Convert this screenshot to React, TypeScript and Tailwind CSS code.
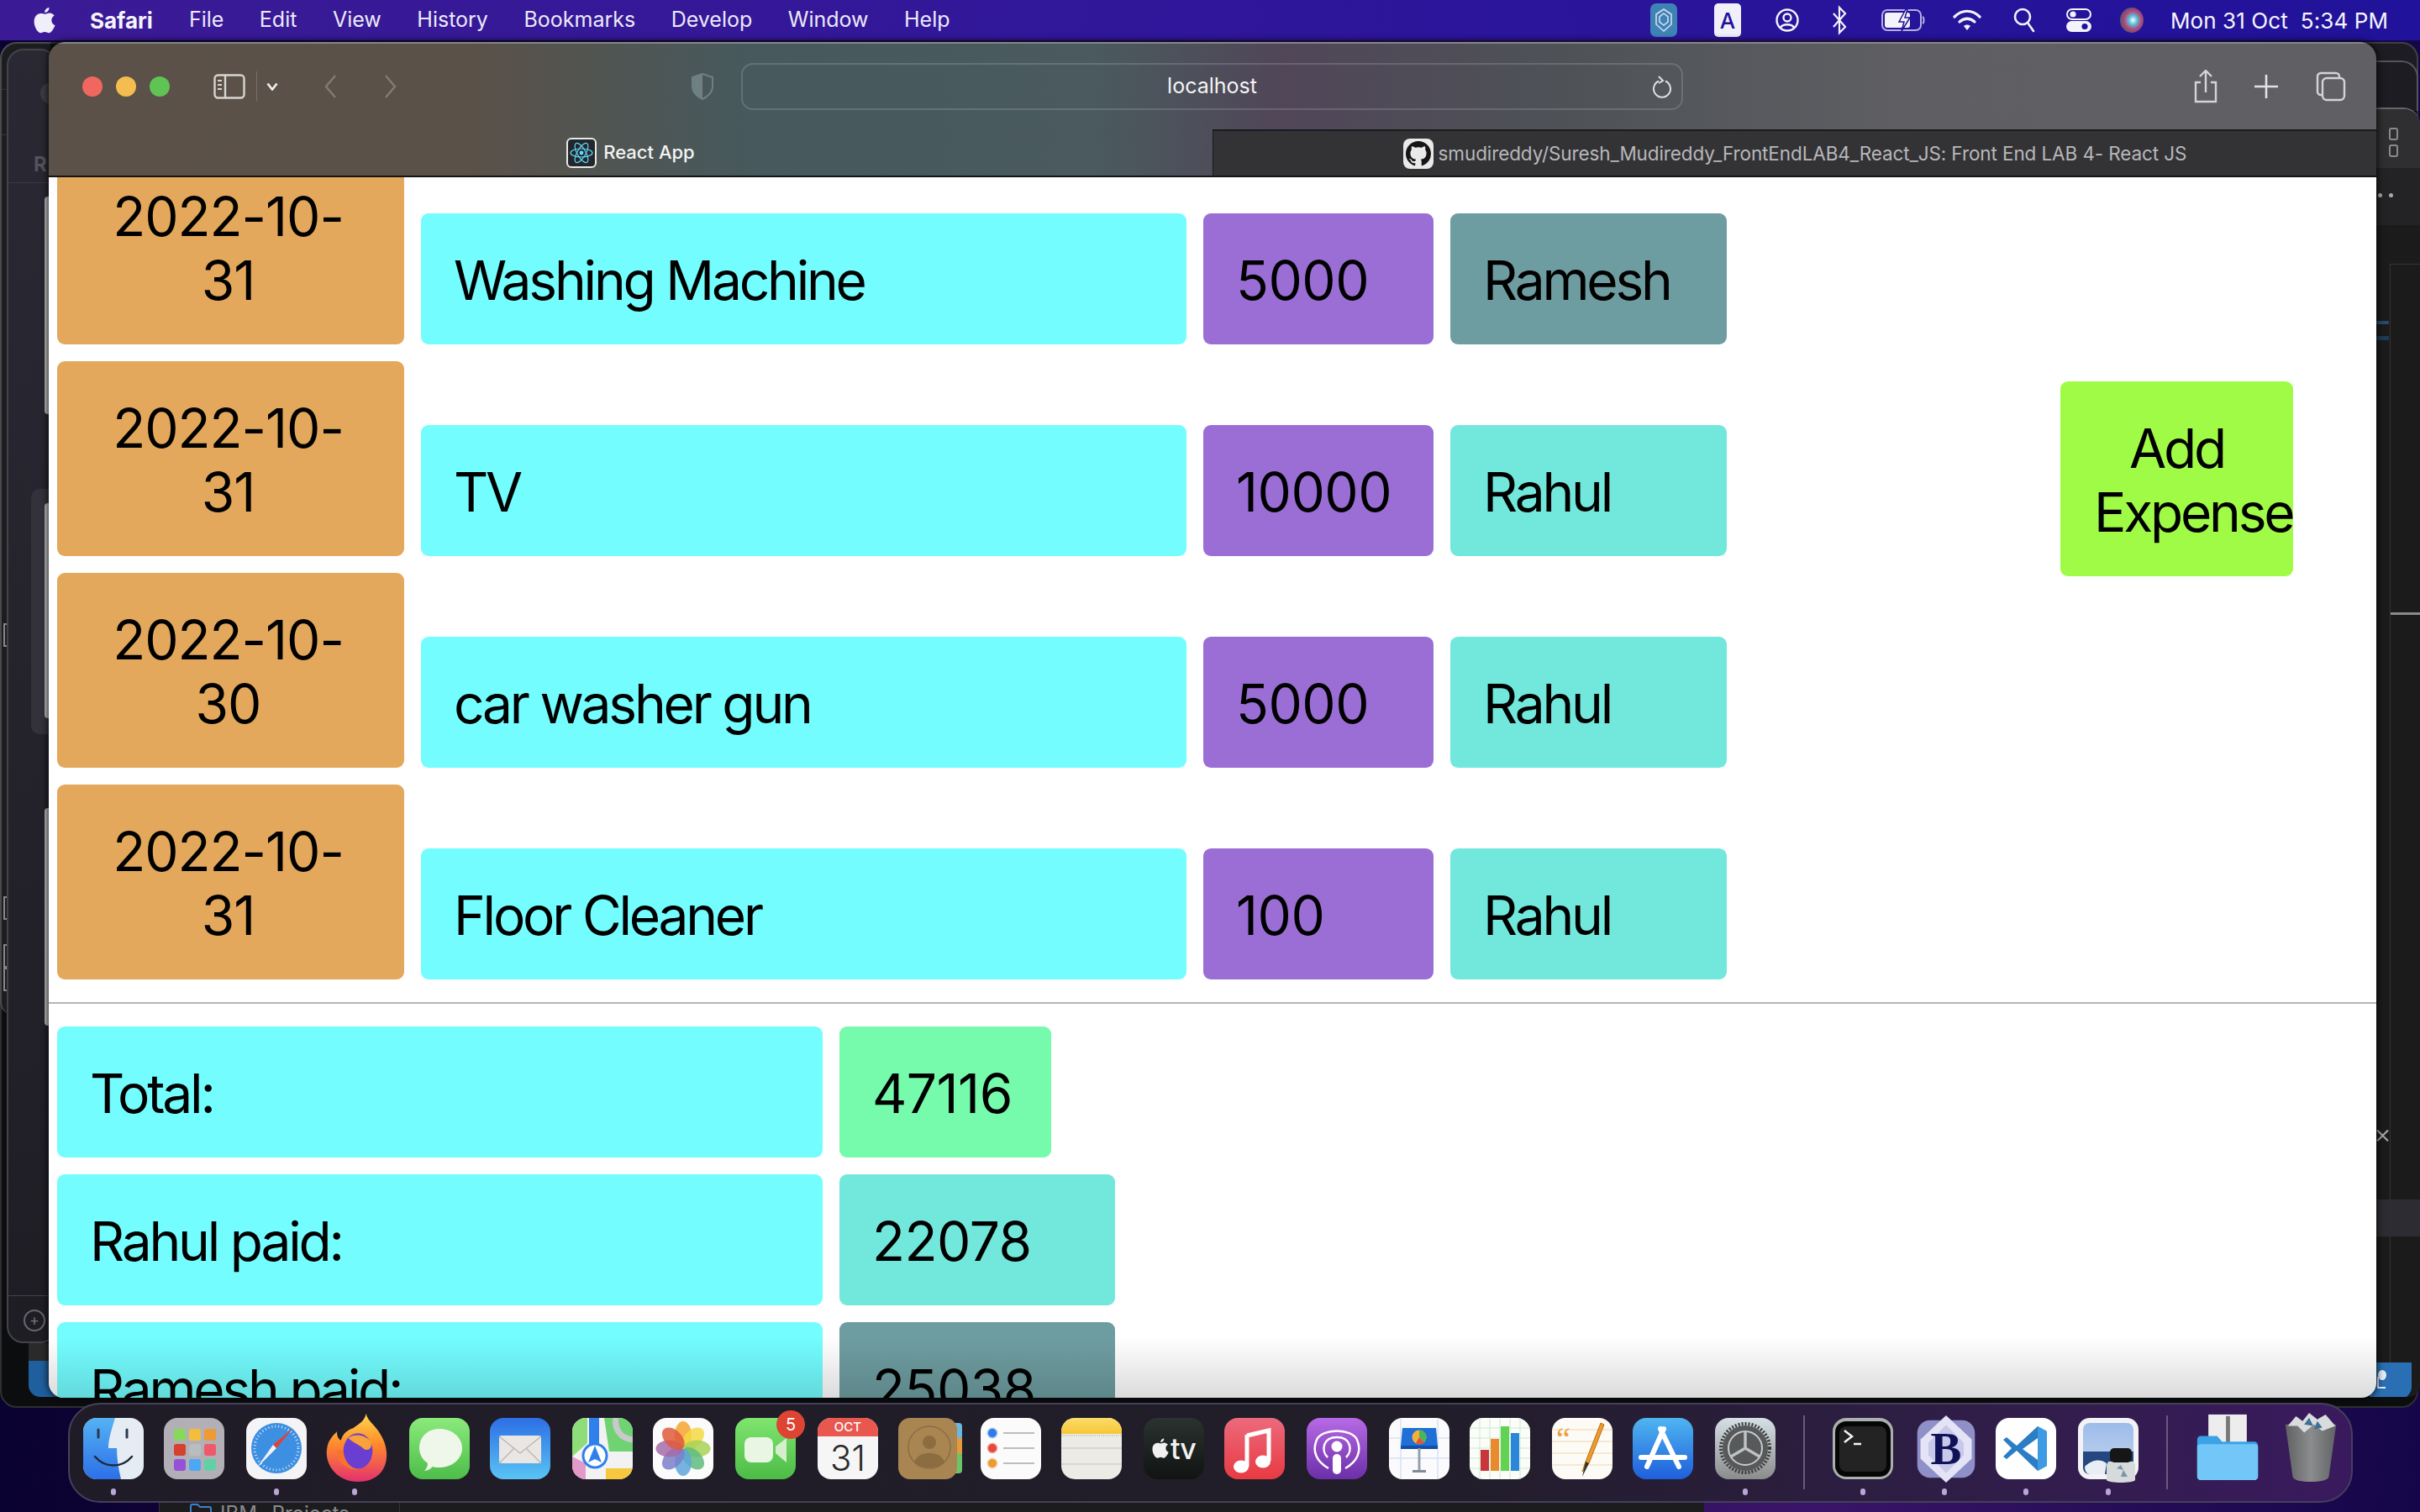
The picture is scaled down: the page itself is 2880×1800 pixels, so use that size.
import { Fragment } from 'react'
import type { JSX } from 'react'

const MENU = ['File', 'Edit', 'View', 'History', 'Bookmarks', 'Develop', 'Window', 'Help']

const EXPENSES = [
  { date: ['2022-10-', '31'], name: 'Washing Machine', price: '5000', payer: 'Ramesh' },
  { date: ['2022-10-', '31'], name: 'TV', price: '10000', payer: 'Rahul' },
  { date: ['2022-10-', '30'], name: 'car washer gun', price: '5000', payer: 'Rahul' },
  { date: ['2022-10-', '31'], name: 'Floor Cleaner', price: '100', payer: 'Rahul' },
]

const cell = 'rounded-[9px] pt-[42px] pb-[38px] text-[64px] leading-[76px] text-black'
const word = `${cell} pr-[40px] pl-[39px] tracking-[-3.2px]`
const num = `${cell} pr-[40px] pl-[39px] tracking-[-0.5px]`

function MenuIcons() {
  return (
    <div className="flex items-center">
      <svg width="32" height="40" viewBox="0 0 32 40">
        <rect width="32" height="40" rx="7" fill="#3f82b5" />
        <path d="M16 7l9 6v12l-9 8-9-8V13z" fill="none" stroke="#cfe0ee" strokeWidth="1.6" />
        <path d="M16 12l5 4v6l-5 4-5-4v-6z" fill="none" stroke="#cfe0ee" strokeWidth="1.6" />
      </svg>
      <div className="ml-[44px] flex h-[40px] w-[32px] items-center justify-center rounded-[5px] bg-[#f1effa] font-['Inter',sans-serif] text-[26px] font-medium text-[#20129a]">
        A
      </div>
      <svg width="28" height="32" viewBox="0 0 28 32" fill="none" stroke="#f4f2fb" strokeWidth="2.4" className="ml-[41px]">
        <circle cx="14" cy="16" r="12.5" />
        <circle cx="14" cy="13" r="4.5" />
        <path d="M6 25c2-5 14-5 16 0" />
      </svg>
      <svg width="18" height="36" viewBox="0 0 18 36" fill="none" stroke="#f4f2fb" strokeWidth="2.2" className="ml-[39px]">
        <path d="M2 10l14 16-7 7V3l7 7L2 26" />
      </svg>
      <svg width="52" height="28" viewBox="0 0 52 28" fill="none" className="ml-[41px]">
        <rect x="1" y="2" width="46" height="24" rx="6" stroke="#b4aee2" strokeWidth="2" />
        <rect x="4" y="5" width="30" height="18" rx="3" fill="#f4f2fb" />
        <path d="M29 1l-8 15h6l-3 11 10-16h-6l3-10z" fill="#f4f2fb" stroke="#20129a" strokeWidth="1.5" />
        <path d="M49 10c2 1 2 7 0 8" stroke="#b4aee2" strokeWidth="2" />
      </svg>
      <svg width="34" height="28" viewBox="0 0 34 28" fill="none" stroke="#f4f2fb" strokeWidth="3.2" strokeLinecap="round" className="ml-[33px]">
        <path d="M2 10c9-9 21-9 30 0" />
        <path d="M8 16c6-5 12-5 18 0" />
        <path d="M17 26l-4-5c2-2 6-2 8 0z" fill="#f4f2fb" stroke="none" />
      </svg>
      <svg width="26" height="30" viewBox="0 0 26 30" fill="none" stroke="#f4f2fb" strokeWidth="2.6" strokeLinecap="round" className="ml-[38px]">
        <circle cx="11" cy="11" r="9" />
        <path d="M17 18l7 10" />
      </svg>
      <svg width="30" height="28" viewBox="0 0 30 28" className="ml-[37px]">
        <rect x="1" y="1" width="28" height="12" rx="6" fill="none" stroke="#f4f2fb" strokeWidth="2" />
        <circle cx="8" cy="7" r="3.6" fill="#f4f2fb" />
        <rect y="15" width="30" height="13" rx="6.5" fill="#f4f2fb" />
        <circle cx="22" cy="21.5" r="3.6" fill="#20129a" />
      </svg>
      <svg width="28" height="30" viewBox="0 0 28 30" className="ml-[34px]">
        <defs>
          <radialGradient id="siri" cx="55%" cy="50%" r="60%">
            <stop offset="0" stopColor="#ffffff" />
            <stop offset="0.3" stopColor="#56c1d8" />
            <stop offset="0.6" stopColor="#b6477f" />
            <stop offset="1" stopColor="#3f5a59" />
          </radialGradient>
        </defs>
        <ellipse cx="14" cy="15" rx="14" ry="15" fill="url(#siri)" />
      </svg>
      <span className="ml-[32px] font-['Inter',sans-serif] text-[26px] tracking-[0.1px] whitespace-pre text-[#f6f4fd]">
        Mon 31 Oct  5:34 PM
      </span>
    </div>
  )
}

function MenuBar() {
  return (
    <div className="relative z-10 flex h-[48px] items-center justify-between bg-gradient-to-r from-[#3b1a95] via-[#2f169a] to-[#20129a] pr-[38px] pl-[40px] font-['Inter',sans-serif]">
      <div className="flex items-center">
        <svg width="26" height="32" viewBox="0 0 26 32" fill="#f1eefb">
          <path d="M18.5 1c.3 3-2.4 6-5.3 6-.3-3 2.600-6 5.300-6zM13.400 8.700c1.500 0 3-1.300 5.600-1.300 2 0 4.300 1.100 5.700 3.200-5 2.800-4.200 9.700.9 11.700-1.600 4-4.700 9-7.500 9-1.800 0-2.800-1.200-4.800-1.200s-3.200 1.200-4.800 1.200C5 31.300.6 24.100.6 17.700c0-6 3.800-9.700 7.700-9.700 2.200 0 3.800.7 5.100.7z" />
        </svg>
        <span className="ml-[41px] text-[26px] font-bold text-[#f6f4fd]">Safari</span>
        <div className="ml-[43px] flex gap-[42.5px] text-[25px] text-[#ece9fa]">
          {MENU.map((m) => (
            <span key={m}>{m}</span>
          ))}
        </div>
      </div>
      <MenuIcons />
    </div>
  )
}

function Toolbar() {
  return (
    <div className="flex h-[104px] items-center border-t-2 border-[#84878a] pl-[40px]">
      <div className="flex gap-[16px]">
        <span className="h-[24px] w-[24px] rounded-full bg-[#f0675f]" />
        <span className="h-[24px] w-[24px] rounded-full bg-[#f5bd4f]" />
        <span className="h-[24px] w-[24px] rounded-full bg-[#5fc454]" />
      </div>
      <svg width="38" height="30" viewBox="0 0 38 30" fill="none" stroke="#d8d4cf" strokeWidth="2.4" className="ml-[52px]">
        <rect x="1.500" y="1.500" width="35" height="27" rx="4" />
        <path d="M14 2v26" />
        <path d="M5 8h5M5 13h5M5 18h5" strokeWidth="2" />
      </svg>
      <div className="ml-[13px] h-[36px] w-px bg-[#77716c]" />
      <svg width="14" height="10" viewBox="0 0 14 10" fill="none" stroke="#f1f1f1" strokeWidth="2.600" className="ml-[11px]">
        <path d="M1.500 1.500L7 8.500l5.500-7" />
      </svg>
      <svg width="16" height="30" viewBox="0 0 16 30" fill="none" stroke="#827c76" strokeWidth="2.400" className="ml-[54px]">
        <path d="M14 2L3 15l11 13" />
      </svg>
      <svg width="16" height="30" viewBox="0 0 16 30" fill="none" stroke="#827c76" strokeWidth="2.400" className="ml-[56px]">
        <path d="M2 2l11 13L2 28" />
      </svg>
      <svg width="28" height="32" viewBox="0 0 28 32" className="ml-[349px]">
        <path d="M14 1l12 4v11c0 7-6 12-12 15C8 28 2 23 2 16V5z" fill="none" stroke="#6f8083" strokeWidth="2" />
        <path d="M14 1L2 5v11c0 7 6 12 12 15z" fill="#6f8083" />
      </svg>
      <div className="relative ml-[32px] flex h-[56px] w-[1121px] items-center justify-center rounded-[14px] border-2 border-[#ffffff26] font-['Inter',sans-serif] text-[25px] text-[#f4f4f4]">
        localhost
        <svg width="24" height="30" viewBox="0 0 24 30" fill="none" stroke="#e0e0e0" strokeWidth="2" className="absolute top-[11px] right-[11px]">
          <path d="M8 8.500a10 10 0 1 0 8 0" />
          <path d="M8 3l5 5-5 3" />
        </svg>
      </div>
      <svg width="30" height="40" viewBox="0 0 30 40" fill="none" stroke="#d4d4d6" strokeWidth="2.400" className="ml-[607px]">
        <path d="M9 15H3v23h24V15h-6" />
        <path d="M15 27V2M8 8l7-7 7 7" />
      </svg>
      <svg width="28" height="28" viewBox="0 0 28 28" fill="none" stroke="#e2e2e4" strokeWidth="2.600" className="ml-[43px]">
        <path d="M14 0v28M0 14h28" />
      </svg>
      <svg width="36" height="36" viewBox="0 0 36 36" fill="none" stroke="#d4d4d6" strokeWidth="2.400" className="ml-[45px]">
        <rect x="8" y="8" width="26" height="26" rx="5" />
        <path d="M8 28H6a4 4 0 0 1-4-4V6a4 4 0 0 1 4-4h18a4 4 0 0 1 4 4v2" />
      </svg>
    </div>
  )
}

function ReactFavicon() {
  return (
    <div className="flex h-[36px] w-[36px] items-center justify-center rounded-[6px] border-2 border-[#e8e8e8] bg-[#23272b]">
      <svg width="28" height="30" viewBox="-14 -15 28 30" fill="none" stroke="#61dafb" strokeWidth="1.200">
        <ellipse rx="13" ry="5" />
        <ellipse rx="13" ry="5" transform="rotate(60)" />
        <ellipse rx="13" ry="5" transform="rotate(120)" />
        <circle r="2.400" fill="#61dafb" stroke="none" />
      </svg>
    </div>
  )
}

function GithubFavicon() {
  return (
    <div className="flex h-[36px] w-[36px] items-center justify-center rounded-[8px] bg-[#e9e9e9]">
      <svg width="30" height="30" viewBox="0 0 16 16" fill="#161616">
        <path d="M8 0C3.580 0 0 3.580 0 8c0 3.540 2.290 6.530 5.470 7.590.4.070.55-.17.55-.38v-1.340c-2.230.48-2.700-1.070-2.700-1.070-.36-.93-.89-1.170-.89-1.170-.73-.5.060-.49.060-.49.800.060 1.220.830 1.220.830.710 1.220 1.870.870 2.330.660.070-.520.280-.870.510-1.070-1.780-.2-3.640-.89-3.640-3.950 0-.870.310-1.590.820-2.150-.080-.2-.360-1.020.080-2.120 0 0 .670-.210 2.200.820a7.600 7.600 0 0 1 4 0c1.530-1.040 2.200-.820 2.200-.820.440 1.100.160 1.920.080 2.120.510.560.820 1.270.820 2.150 0 3.070-1.870 3.750-3.650 3.950.290.250.540.730.540 1.480v2.200c0 .210.150.460.550.380A8 8 0 0 0 16 8c0-4.420-3.580-8-8-8z" />
      </svg>
    </div>
  )
}

function TabBar() {
  return (
    <div className="flex h-[57px] border-b-2 border-[#151515]">
      <div className="flex w-[1385px] items-center justify-center gap-[8px] font-['Inter',sans-serif] text-[22px] font-medium text-[#f4f4f4]">
        <ReactFavicon />
        <span>React App</span>
      </div>
      <div className="flex flex-1 items-center justify-center gap-[6px] border-t-2 border-l border-[#1a1a1a] bg-[#333336] font-['Inter',sans-serif] text-[22.5px] tracking-[-0.1px] text-[#b8b8ba]">
        <GithubFavicon />
        <span>smudireddy/Suresh_Mudireddy_FrontEndLAB4_React_JS: Front End LAB 4- React JS</span>
      </div>
    </div>
  )
}

function ExpensePage() {
  return (
    <div className="relative flex-1 overflow-hidden bg-white font-['Inter',sans-serif]">
      {/* page is scrolled a little, first row is cut by the tab bar */}
      <div className="-mt-[33px] flex pl-[10px]">
        <div className="flex w-[1987px] flex-col gap-[20px]">
          {EXPENSES.map((e) => (
            <div key={e.name} className="flex items-end gap-[20px]">
              <div className={`${cell} w-[413px] bg-[#e3a85c] pr-[43px] pl-[37px] text-center tracking-[-1px]`}>
                {e.date[0]}
                <br />
                {e.date[1]}
              </div>
              <div className={`${word} w-[911px] bg-[#73fdff]`}>{e.name}</div>
              <div className={`${num} w-[274px] bg-[#9b6ed6]`}>{e.price}</div>
              <div className={`${word} w-[329px] ${e.payer === 'Ramesh' ? 'bg-[#6e9da1]' : 'bg-[#72e8dd]'}`}>{e.payer}</div>
            </div>
          ))}
        </div>
        <div className="mt-[276px] ml-[397px]">
          <button className={`${cell} w-[277px] bg-[#a0fb47] px-[40px] text-center tracking-[-3.2px]`}>Add Expense</button>
        </div>
      </div>

      <div className="mt-[27px] border-t-2 border-[#b5b5b5] pt-[27px] pl-[10px]">
        <div className="flex flex-col gap-[20px]">
          <div className="flex gap-[20px]">
            <div className={`${word} w-[911px] bg-[#73fdff]`}>Total:</div>
            <div className={`${num} w-[252px] bg-[#75fbab]`}>47116</div>
          </div>
          <div className="flex gap-[20px]">
            <div className={`${word} w-[911px] bg-[#73fdff]`}>Rahul paid:</div>
            <div className={`${num} w-[328px] bg-[#72e8dd]`}>22078</div>
          </div>
          <div className="flex gap-[20px]">
            <div className={`${word} w-[911px] bg-[#73fdff]`}>Ramesh paid:</div>
            <div className={`${num} w-[328px] bg-[#6e9da1]`}>25038</div>
          </div>
        </div>
      </div>

      {/* shadow the dock throws on the page */}
      <div className="pointer-events-none absolute right-0 bottom-0 left-0 h-[72px] bg-gradient-to-b from-transparent to-[#00000024]" />
    </div>
  )
}

function FinderIcon() {
  return (
    <svg width="72" height="73" viewBox="0 0 72 73">
      <defs>
        <linearGradient id="fi" x1="0" y1="0" x2="0" y2="1">
          <stop offset="0" stopColor="#55b2f3" />
          <stop offset="1" stopColor="#2c6fe8" />
        </linearGradient>
        <clipPath id="fc"><rect width="72" height="73" rx="16" /></clipPath>
      </defs>
      <g clipPath="url(#fc)">
        <rect width="72" height="73" fill="#e6ecf3" />
        <path d="M0 0h38c-4 14-8 24-8 36h10c0 12 2 25 5 37H0z" fill="url(#fi)" />
        <path d="M18 14v9M52 14v9" stroke="#2b3a4e" strokeWidth="3" strokeLinecap="round" />
        <path d="M14 46c12 14 32 14 44 0" fill="none" stroke="#1f2b3c" strokeWidth="2.500" strokeLinecap="round" />
      </g>
    </svg>
  )
}

function LaunchpadIcon() {
  const colors = ['#86d95a', '#f4bd3d', '#ee9a35', '#d6402f', '#b9bdbf', '#ee5a6c', '#9552d8', '#4aa8f5', '#62d0a6']
  return (
    <svg width="72" height="73" viewBox="0 0 72 73">
      <rect width="72" height="73" rx="16" fill="#b2b0b6" />
      {colors.map((c, i) => (
        <rect key={c} x={12 + (i % 3) * 18} y={13 + Math.floor(i / 3) * 18} width="14" height="14" rx="3" fill={c} />
      ))}
    </svg>
  )
}

function SafariIcon() {
  return (
    <svg width="72" height="73" viewBox="0 0 72 73">
      <rect width="72" height="73" rx="16" fill="#f4f4f6" />
      <circle cx="36" cy="36" r="30" fill="#3d8fe2" />
      <circle cx="36" cy="36" r="26" fill="none" stroke="#d6e8f8" strokeWidth="3" strokeDasharray="1 3" />
      <path d="M36 36l20-24-24 20z" fill="#e4402f" />
      <path d="M36 36L12 60l20-28z" fill="#f2f2f2" />
    </svg>
  )
}

function FirefoxIcon() {
  return (
    <svg width="80" height="81" viewBox="0 0 80 84" className="-mt-[5px]">
      <defs>
        <linearGradient id="ff" x1="0" y1="0" x2="0" y2="1">
          <stop offset="0" stopColor="#ffd84a" />
          <stop offset="0.45" stopColor="#ff8a2b" />
          <stop offset="1" stopColor="#e3316f" />
        </linearGradient>
      </defs>
      <path d="M50 0c2 10 12 14 18 26 14 22 10 58-28 58C12 84-2 60 2 42c1-8 6-14 12-20 0 6 2 9 5 11 2-8 8-13 15-15 6-5 14-8 16-18z" fill="url(#ff)" />
      <ellipse cx="40" cy="46" rx="18" ry="22" fill="#6a3ed0" />
      <path d="M28 30c8-6 20-4 28 4 2 8-2 12-8 10-6-6-14-8-20-14z" fill="#f9a13a" />
      <path d="M22 44c0 14 10 26 22 24-14 4-30-6-30-22z" fill="#f7722e" />
    </svg>
  )
}

function MessagesIcon() {
  return (
    <svg width="72" height="73" viewBox="0 0 72 73">
      <defs>
        <linearGradient id="mg" x1="0" y1="0" x2="0" y2="1">
          <stop offset="0" stopColor="#8aea7b" />
          <stop offset="1" stopColor="#4dbd4a" />
        </linearGradient>
      </defs>
      <rect width="72" height="73" rx="16" fill="url(#mg)" />
      <path d="M36 13c15 0 27 10 27 23S51 59 36 59c-3 0-6 0-8-1-3 3-6 5-10 5 2-2 4-5 4-9-6-4-10-11-10-18 0-13 9-23 24-23z" fill="#eef7ea" />
    </svg>
  )
}

function MailIcon() {
  return (
    <svg width="72" height="73" viewBox="0 0 72 73">
      <defs>
        <linearGradient id="mlg" x1="0" y1="0" x2="0" y2="1">
          <stop offset="0" stopColor="#2c6fe4" />
          <stop offset="1" stopColor="#5ac4f5" />
        </linearGradient>
      </defs>
      <rect width="72" height="73" rx="16" fill="url(#mlg)" />
      <rect x="11" y="21" width="50" height="33" rx="3" fill="#e9e6e3" />
      <path d="M11 22l25 20 25-20M11 54l18-18M61 54L43 36" fill="none" stroke="#b8b5b2" strokeWidth="1.300" />
    </svg>
  )
}

function MapsIcon() {
  return (
    <svg width="72" height="73" viewBox="0 0 72 73">
      <defs><clipPath id="mc"><rect width="72" height="73" rx="16" /></clipPath></defs>
      <g clipPath="url(#mc)">
        <rect width="72" height="73" fill="#f2f2f2" />
        <path d="M0 0h18v30L0 46z" fill="#8fdc7a" />
        <path d="M38 0h34v40H44z" fill="#6fd374" />
        <path d="M0 46l16 8v19H0z" fill="#e39ac8" />
        <path d="M40 60h32v13H40z" fill="#f6c73f" />
        <path d="M20 0h12v34H20z" fill="#2f80ed" />
        <path d="M72 26C56 24 50 12 52 0" fill="none" stroke="#c9c9cc" strokeWidth="7" />
        <circle cx="27" cy="45" r="14" fill="#fff" stroke="#2f80ed" strokeWidth="3" />
        <path d="M27 33l8 20-8-4-8 4z" fill="#2f80ed" />
      </g>
    </svg>
  )
}

function PhotosIcon() {
  const petals = ['#f6a32f', '#f3d944', '#a8d256', '#5fbb7e', '#5ea6da', '#7b7fc9', '#a46ba9', '#df5a3d']
  return (
    <svg width="72" height="73" viewBox="0 0 72 73">
      <rect width="72" height="73" rx="16" fill="#fbfbfb" />
      {petals.map((c, i) => (
        <ellipse key={c} cx="36" cy="20" rx="10" ry="16" fill={c} fillOpacity="0.85" transform={`rotate(${i * 45} 36 36.500)`} />
      ))}
    </svg>
  )
}

function FaceTimeIcon() {
  return (
    <div className="relative">
      <svg width="72" height="73" viewBox="0 0 72 73">
        <defs>
          <linearGradient id="ftg" x1="0" y1="0" x2="0" y2="1">
            <stop offset="0" stopColor="#7fe56f" />
            <stop offset="1" stopColor="#4cbc47" />
          </linearGradient>
        </defs>
        <rect width="72" height="73" rx="16" fill="url(#ftg)" />
        <rect x="11" y="23" width="34" height="30" rx="8" fill="#e9f6e4" />
        <path d="M48 34l13-10v29L48 42z" fill="#d5efcd" />
      </svg>
      <span className="absolute -top-[9px] -right-[11px] flex h-[34px] w-[34px] items-center justify-center rounded-full bg-[#de4434] font-['Inter',sans-serif] text-[20px] text-white">
        5
      </span>
    </div>
  )
}

function CalendarIcon() {
  return (
    <div className="flex h-[73px] w-[72px] flex-col overflow-hidden rounded-[16px] bg-[#f6f6f6] font-['Inter',sans-serif]">
      <div className="flex h-[22px] items-center justify-center bg-[#e8584f] text-[15px] font-medium text-white">OCT</div>
      <div className="flex flex-1 items-center justify-center text-[42px] leading-none font-light text-[#2b2b2b]">31</div>
    </div>
  )
}

function ContactsIcon() {
  return (
    <svg width="76" height="73" viewBox="0 0 76 73">
      <rect x="60" y="6" width="16" height="20" rx="4" fill="#6db7df" />
      <rect x="60" y="24" width="16" height="20" fill="#e49a3b" />
      <rect x="60" y="42" width="16" height="24" rx="4" fill="#6cc46a" />
      <rect width="70" height="73" rx="14" fill="#a98552" />
      <circle cx="37" cy="35" r="25" fill="none" stroke="#8c6d41" strokeWidth="1.500" />
      <circle cx="37" cy="29" r="8" fill="#8c6d41" />
      <path d="M19 53c4-15 32-15 36 0-8 8-28 8-36 0z" fill="#8c6d41" />
    </svg>
  )
}

function RemindersIcon() {
  return (
    <svg width="72" height="73" viewBox="0 0 72 73">
      <rect width="72" height="73" rx="16" fill="#fbfbfb" />
      <circle cx="14" cy="18" r="5" fill="#2f7be8" stroke="#2f7be8" strokeOpacity=".4" strokeWidth="3" />
      <circle cx="14" cy="36" r="5" fill="#e6483c" stroke="#e6483c" strokeOpacity=".4" strokeWidth="3" />
      <circle cx="14" cy="54" r="5" fill="#ee9a33" stroke="#ee9a33" strokeOpacity=".4" strokeWidth="3" />
      <path d="M27 18h37M27 36h37M27 54h37" stroke="#bdbdbd" strokeWidth="1.800" />
    </svg>
  )
}

function NotesIcon() {
  return (
    <svg width="72" height="73" viewBox="0 0 72 73">
      <defs>
        <linearGradient id="ng" x1="0" y1="0" x2="0" y2="1">
          <stop offset="0" stopColor="#fbdc6b" />
          <stop offset="1" stopColor="#f7c636" />
        </linearGradient>
        <clipPath id="nc"><rect width="72" height="73" rx="16" /></clipPath>
      </defs>
      <g clipPath="url(#nc)">
        <rect width="72" height="73" fill="#ecebe5" />
        <rect width="72" height="19" fill="url(#ng)" />
        <path d="M0 21h72" stroke="#c4c3bd" strokeWidth="2" strokeDasharray="1 1.500" />
        <path d="M0 36h72M0 55h72" stroke="#d2d1cb" strokeWidth="1.500" />
      </g>
    </svg>
  )
}

function TvIcon() {
  return (
    <div className="flex h-[73px] w-[72px] items-center justify-center rounded-[16px] bg-gradient-to-b from-[#2a332f] to-[#101413] font-['Inter',sans-serif] text-[34px] font-medium tracking-[-1px] text-[#f1f1f1]">
      <svg width="20" height="26" viewBox="0 0 26 32" fill="#f1f1f1" className="mr-[2px] mb-[2px]">
        <path d="M18.500 1c.3 3-2.400 6-5.300 6-.3-3 2.600-6 5.300-6zM13.400 8.700c1.500 0 3-1.300 5.600-1.300 2 0 4.300 1.100 5.700 3.200-5 2.800-4.200 9.700.9 11.700-1.600 4-4.700 9-7.500 9-1.800 0-2.800-1.200-4.800-1.200s-3.200 1.200-4.800 1.200C5 31.300.6 24.100.6 17.700c0-6 3.800-9.700 7.700-9.700 2.200 0 3.800.7 5.100.7z" />
      </svg>
      tv
    </div>
  )
}

function MusicIcon() {
  return (
    <svg width="72" height="73" viewBox="0 0 72 73">
      <defs>
        <linearGradient id="mug" x1="0" y1="0" x2="0" y2="1">
          <stop offset="0" stopColor="#ec6a7c" />
          <stop offset="1" stopColor="#e83a42" />
        </linearGradient>
      </defs>
      <rect width="72" height="73" rx="16" fill="url(#mug)" />
      <path d="M27 21l26-6v36" fill="none" stroke="#fff" strokeWidth="5" />
      <path d="M27 20v38" stroke="#fff" strokeWidth="5" />
      <ellipse cx="20" cy="58" rx="9" ry="7.500" fill="#fff" />
      <ellipse cx="46" cy="52" rx="9" ry="7.500" fill="#fff" />
    </svg>
  )
}

function PodcastsIcon() {
  return (
    <svg width="72" height="73" viewBox="0 0 72 73" fill="none">
      <defs>
        <linearGradient id="pg" x1="0" y1="0" x2="0" y2="1">
          <stop offset="0" stopColor="#b86ae6" />
          <stop offset="1" stopColor="#6b2fa8" />
        </linearGradient>
      </defs>
      <rect width="72" height="73" rx="16" fill="url(#pg)" />
      <path d="M26 60C12 52 6 40 12 26 18 12 54 12 60 26c6 14 0 26-14 34" stroke="#fff" strokeWidth="2.500" />
      <path d="M25 47c-8-8-6-24 11-24s19 16 11 24" stroke="#fff" strokeWidth="2.500" />
      <circle cx="36" cy="34" r="6.500" fill="#fff" />
      <rect x="31" y="43" width="10" height="24" rx="5" fill="#fff" />
    </svg>
  )
}

function KeynoteIcon() {
  return (
    <svg width="72" height="73" viewBox="0 0 72 73">
      <rect width="72" height="73" rx="16" fill="#fbfbfd" />
      <path d="M14 0v73M58 0v73M0 24h72M0 48h72" stroke="#d6e4f2" strokeWidth="1.500" />
      <path d="M16 12h40l2 22H14z" fill="#1f6fd6" />
      <rect x="14" y="33" width="44" height="4" fill="#124fa8" />
      <path d="M36 36v28" stroke="#93a0ac" strokeWidth="3" />
      <rect x="28" y="62" width="16" height="3" fill="#838b92" />
      <circle cx="36" cy="23" r="8.500" fill="#f2b23a" />
      <path d="M36 23V14.500a8.500 8.500 0 0 1 6 14.500z" fill="#4ab659" />
      <path d="M36 23l6 6a8.500 8.500 0 0 1-10 1z" fill="#e2543d" />
    </svg>
  )
}

function NumbersIcon() {
  return (
    <svg width="72" height="73" viewBox="0 0 72 73">
      <rect width="72" height="73" rx="16" fill="#fbfdf9" />
      <path d="M12 0v73M24 0v73M36 0v73M48 0v73M60 0v73M0 12h72M0 24h72M0 36h72M0 48h72M0 60h72" stroke="#cfe7cf" strokeWidth="1" />
      <rect x="13" y="38" width="10" height="25" fill="#c9363a" />
      <rect x="25" y="25" width="10" height="38" fill="#e98a2d" />
      <rect x="37" y="10" width="10" height="53" fill="#62d253" />
      <rect x="49" y="18" width="10" height="45" fill="#2a86d8" />
    </svg>
  )
}

function PagesIcon() {
  return (
    <svg width="72" height="73" viewBox="0 0 72 73" fill="none">
      <rect width="72" height="73" rx="16" fill="#fdfbf6" />
      <path d="M0 14h72M0 28h72M0 42h72M0 56h72" stroke="#f6e1c6" strokeWidth="1.500" />
      <text x="5" y="38" fontFamily="Liberation Serif, serif" fontSize="38" fill="#ef9d3f">“</text>
      <path d="M58 6L40 52l-4 12 8-10 18-46z" fill="#ef9a2c" stroke="#b86f17" strokeWidth="1" />
      <path d="M40 52l-4 18 8-16z" fill="#33332f" />
    </svg>
  )
}

function AppStoreIcon() {
  return (
    <svg width="72" height="73" viewBox="0 0 72 73" fill="none">
      <defs>
        <linearGradient id="ag" x1="0" y1="0" x2="0" y2="1">
          <stop offset="0" stopColor="#4fb5f0" />
          <stop offset="1" stopColor="#1e5fdc" />
        </linearGradient>
      </defs>
      <rect width="72" height="73" rx="16" fill="url(#ag)" />
      <path d="M37 13L17 58M33 13l22 45M10 47h52" stroke="#fff" strokeWidth="6" strokeLinecap="round" />
    </svg>
  )
}

function SettingsIcon() {
  return (
    <svg width="72" height="73" viewBox="0 0 72 73" fill="none">
      <defs>
        <linearGradient id="sg" x1="0" y1="0" x2="0" y2="1">
          <stop offset="0" stopColor="#d5e0e5" />
          <stop offset="1" stopColor="#8b8b8b" />
        </linearGradient>
      </defs>
      <rect width="72" height="73" rx="16" fill="url(#sg)" />
      <circle cx="36" cy="36" r="27" fill="#57595a" />
      <circle cx="36" cy="36" r="29" stroke="#3b3c3d" strokeWidth="4" strokeDasharray="2 2" />
      <circle cx="36" cy="36" r="20" stroke="#c8cbcc" strokeWidth="2" />
      <path d="M36 36V16M36 36l17 10M36 36L19 46" stroke="#bfc2c4" strokeWidth="3.500" />
    </svg>
  )
}

function TerminalIcon() {
  return (
    <svg width="72" height="73" viewBox="0 0 72 73" fill="none">
      <rect width="72" height="73" rx="16" fill="#a9b0ae" />
      <rect x="3" y="4" width="66" height="66" rx="13" fill="#060606" />
      <rect x="8" y="10" width="56" height="54" rx="8" fill="#232323" />
      <path d="M14 15l9 7-9 7M25 31h9" stroke="#f4f4f4" strokeWidth="2.500" />
    </svg>
  )
}

function BBEditIcon() {
  return (
    <svg width="80" height="80" viewBox="0 0 80 84" className="-mt-[3px] -ml-[2px]">
      <rect x="4" y="6" width="72" height="72" rx="16" fill="#8f90c8" />
      <path d="M40 0l32 30v24L40 84 8 54V30z" fill="#e4e4f6" />
      <path d="M40 12l22 22v16L40 72 18 50V34z" fill="#c8c8ea" />
      <text x="40" y="61" textAnchor="middle" fontFamily="Liberation Serif, serif" fontWeight="700" fontSize="58" fill="#0f1257">B</text>
    </svg>
  )
}

function VSCodeIcon() {
  return (
    <svg width="72" height="73" viewBox="0 0 72 73">
      <rect width="72" height="73" rx="16" fill="#fff" />
      <path d="M50 10l11 6v41l-11 6-25-24-12 10-4-3 10-10-10-10 4-3 12 10z" fill="#2b7dc4" />
      <path d="M50 10l11 6v41l-11 6z" fill="#3f9ae4" />
      <path d="M50 24L32 37l18 13z" fill="#fff" />
    </svg>
  )
}

function PreviewIcon() {
  return (
    <svg width="76" height="78" viewBox="0 0 76 78">
      <defs><linearGradient id="pv" x1="0" y1="0" x2="0" y2="1"><stop offset="0" stopColor="#9dbbea" /><stop offset="1" stopColor="#c4d6ee" /></linearGradient></defs>
      <rect width="72" height="73" rx="14" fill="#f3f3f5" />
      <rect x="6" y="6" width="60" height="61" rx="8" fill="url(#pv)" />
      <path d="M6 40h60v19c0 5-4 8-8 8H14c-4 0-8-3-8-8z" fill="#23477e" />
      <path d="M8 58c8-8 18-10 26-4l-2 13H14c-3 0-6-3-6-9z" fill="#e8eef4" />
      <path d="M36 52h30l2 4v18c-2 4-32 4-34 0V56z" fill="#d7dadb" />
      <path d="M46 60l5-4 3 6zM54 62l5 8-8 0z" fill="#7d93a8" />
      <rect x="38" y="36" width="26" height="17" rx="5" fill="#161616" />
    </svg>
  )
}

function FolderIcon() {
  return (
    <svg width="76" height="80" viewBox="0 0 76 84">
      <rect x="14" y="2" width="48" height="40" fill="#ededed" />
      <path d="M36 4h5v36h-5z" fill="#777" />
      <path d="M0 34c0-3 2-5 5-5h20l6 7h40c3 0 5 2 5 5v38c0 3-2 5-5 5H5c-3 0-5-2-5-5z" fill="#3aa3e6" />
      <path d="M0 42c0-2 2-3 4-3h68c2 0 4 1 4 3v38c0 2-2 4-4 4H4c-2 0-4-2-4-4z" fill="#72c7f8" />
    </svg>
  )
}

function TrashIcon() {
  return (
    <svg width="64" height="82" viewBox="0 0 64 84">
      <defs><linearGradient id="tg" x1="0" y1="0" x2="1" y2="0"><stop offset="0" stopColor="#5f6162" /><stop offset="0.5" stopColor="#8a8c8e" /><stop offset="1" stopColor="#606264" /></linearGradient></defs>
      <path d="M1 14h62l-9 64c-1 8-43 8-44 0z" fill="url(#tg)" />
      <path d="M4 16L14 4l8 6 8-10 10 8 10-6 12 14-16 6-10-8-12 10-8-8z" fill="#d9dcdd" />
      <path d="M24 14l6-8 5 10zM40 10l6 8-10 2z" fill="#3e6f96" />
    </svg>
  )
}

const APPS_LEFT: { el: JSX.Element; dot?: boolean; w: number }[] = [
  { el: <FinderIcon />, dot: true, w: 96 },
  { el: <LaunchpadIcon />, w: 98 },
  { el: <SafariIcon />, dot: true, w: 93 },
  { el: <FirefoxIcon />, dot: true, w: 101 },
  { el: <MessagesIcon />, w: 96 },
  { el: <MailIcon />, w: 98 },
  { el: <MapsIcon />, w: 96 },
  { el: <PhotosIcon />, w: 98 },
  { el: <FaceTimeIcon />, w: 98 },
  { el: <CalendarIcon />, w: 96 },
  { el: <ContactsIcon />, w: 98 },
  { el: <RemindersIcon />, w: 96 },
  { el: <NotesIcon />, w: 98 },
  { el: <TvIcon />, w: 96 },
  { el: <MusicIcon />, w: 98 },
  { el: <PodcastsIcon />, w: 98 },
  { el: <KeynoteIcon />, w: 96 },
  { el: <NumbersIcon />, w: 98 },
  { el: <PagesIcon />, w: 96 },
  { el: <AppStoreIcon />, w: 98 },
  { el: <SettingsIcon />, dot: true, w: 72 },
]

const APPS_RIGHT: { el: JSX.Element; dot?: boolean; w: number }[] = [
  { el: <TerminalIcon />, dot: true, w: 97 },
  { el: <BBEditIcon />, dot: true, w: 97 },
  { el: <VSCodeIcon />, dot: true, w: 98 },
  { el: <PreviewIcon />, dot: true, w: 72 },
]

function DockItem({ el, dot, w }: { el: JSX.Element; dot?: boolean; w: number }) {
  return (
    <div className="relative h-[73px] shrink-0" style={{ width: w }}>
      <div className="absolute top-0 left-0">{el}</div>
      {dot && <span className="absolute top-[84px] left-[33px] h-[8px] w-[6px] rounded-full bg-[#b9a6d6]" />}
    </div>
  )
}

function Dock() {
  return (
    <div className="relative z-10 mt-[6px] ml-[81px] flex h-[119px] w-[2719px] items-start rounded-[38px] border-2 border-[#45405a] bg-gradient-to-r from-[#1f1c28] via-[#211d29] via-60% to-[#3a1a5e] pt-[16px] pl-[16px]">
      {APPS_LEFT.map((a, i) => (
        <Fragment key={i}>
          <DockItem {...a} />
        </Fragment>
      ))}
      <div className="mx-[33px] -mt-[3px] h-[88px] w-[2px] shrink-0 bg-[#6a5a80]" />
      {APPS_RIGHT.map((a, i) => (
        <DockItem key={i} {...a} />
      ))}
      <div className="mx-[33px] -mt-[3px] h-[88px] w-[2px] shrink-0 bg-[#6a5a80]" />
      <div className="-mt-[6px] flex items-start gap-[29px]">
        <FolderIcon />
        <TrashIcon />
      </div>
    </div>
  )
}

function BackgroundWindows() {
  return (
    <>
      {/* editor window */}
      <div className="absolute top-[50px] left-0 h-[1626px] w-[2878px] overflow-hidden rounded-[20px] border-2 border-[#2f2f33] bg-[#0c0d0f]" />
      {/* left sidebar windows */}
      <div className="absolute top-[50px] left-0 h-[1157px] w-[60px] overflow-hidden rounded-tl-[20px] rounded-bl-[14px] border-t-2 border-l-2 border-[#4a4a4e] bg-[#1c1d1f]">
        <div className="absolute top-[54px] h-px w-full bg-[#333]" />
        <div className="absolute top-[108px] h-px w-full bg-[#333]" />
        <div className="absolute top-[690px] left-[2px] h-[28px] w-[4px] border-y-2 border-l-2 border-[#888]" />
        <div className="absolute top-[1015px] left-[2px] h-[28px] w-[4px] border-y-2 border-l-2 border-[#888]" />
        <div className="absolute top-[1072px] left-[2px] h-[28px] w-[4px] border-y-2 border-l-2 border-[#888]" />
        <div className="absolute top-[1100px] left-[2px] h-[28px] w-[4px] border-y-2 border-l-2 border-[#888]" />
      </div>
      <div className="absolute top-[58px] left-[8px] h-[1541px] w-[60px] overflow-hidden rounded-[20px] border-2 border-[#44434a] bg-gradient-to-b from-[#2a2833] to-[#1f1d24]">
        <div className="absolute top-[38px] left-[38px] h-[26px] w-[30px] rounded-full bg-[#3c3b40]" />
        <span className="absolute top-[118px] left-[30px] font-['Inter',sans-serif] text-[24px] font-bold text-[#55545a]">R</span>
        <div className="absolute top-[157px] right-0 left-0 h-px bg-[#3a3940]" />
        <div className="absolute top-[174px] left-[43px] h-[259px] w-[6px] rounded-l-[4px] bg-[#b8b8b8]" />
        <div className="absolute top-[522px] left-[27px] h-[292px] w-[30px] rounded-tl-[10px] rounded-bl-[10px] bg-[#33323a]" />
        <div className="absolute top-[539px] left-[43px] h-[256px] w-[6px] rounded-l-[4px] bg-[#b8b8b8]" />
        <div className="absolute top-[902px] left-[43px] h-[259px] w-[6px] rounded-l-[4px] bg-[#b8b8b8]" />
        <div className="absolute right-0 bottom-[54px] left-0 h-px bg-[#44434a]" />
        <div className="absolute bottom-[12px] left-[18px] flex h-[26px] w-[26px] items-center justify-center rounded-full border-2 border-[#68676d] text-[18px] leading-none text-[#78777c]">
          +
        </div>
      </div>
      <div className="absolute top-[1599px] left-[34px] h-[64px] w-[40px] rounded-bl-[14px] bg-gradient-to-b from-[#2a2a2a] from-33% to-[#1f5f9e] to-33%" />
      {/* right windows */}
      <div className="absolute top-[50px] right-[2px] h-[60px] w-[70px] rounded-tr-[20px] border-t-2 border-r-2 border-[#3f3f44] bg-[#1c1c22]" />
      <div className="absolute top-[72px] right-[2px] h-[60px] w-[60px] rounded-tr-[20px] border-t-2 border-r-2 border-[#55555a] bg-[#1c1c22]" />
      <div className="absolute top-[128px] right-0 h-[1535px] w-[60px] overflow-hidden rounded-tr-[20px] rounded-br-[14px] border-t-2 border-[#66666a] bg-[#1b1b1b]">
        <div className="h-[70px] bg-[#2f2f31]">
          <div className="ml-[23px] flex flex-col gap-[5px] pt-[22px]">
            <span className="h-[15px] w-[11px] rounded-[3px] border-2 border-[#8a8a8c]" />
            <span className="h-[15px] w-[11px] rounded-[3px] border-2 border-[#8a8a8c]" />
          </div>
        </div>
        <div className="flex h-[68px] items-start gap-[8px] bg-[#232325] pt-[30px] pl-[10px]">
          <span className="h-[5px] w-[5px] rounded-full bg-[#aaa]" />
          <span className="h-[5px] w-[5px] rounded-full bg-[#aaa]" />
        </div>
        <div className="absolute top-[184px] left-[24px] h-[1350px] w-px bg-[#333]" />
        <div className="absolute top-[184px] left-[24px] h-px w-[36px] bg-[#333]" />
        <div className="absolute top-[252px] left-[2px] h-[4px] w-[21px] bg-[#2a4a66]" />
        <div className="absolute top-[270px] left-[2px] h-[5px] w-[21px] bg-[#1f3a55]" />
        <div className="absolute top-[599px] left-[25px] h-[3px] w-[36px] bg-[#8a8a8a]" />
        <div className="absolute top-[1204px] left-[5px] font-['Inter',sans-serif] text-[32px] leading-none font-light text-[#aaa]">×</div>
        <div className="absolute top-[1298px] left-0 h-[44px] w-full bg-[#2d2c33]" />
        <div className="absolute top-[1492px] left-0 flex h-[43px] w-[50px] items-center rounded-br-[14px] bg-[#2a6fb4] pl-[6px]">
          <svg width="14" height="26" viewBox="0 0 14 26" fill="none" stroke="#e6eef6" strokeWidth="2">
            <ellipse cx="9" cy="6" rx="4" ry="5" fill="#e6eef6" />
            <path d="M4 8v13h9" />
          </svg>
        </div>
      </div>
      {/* finder window peeking under the dock */}
      <div className="absolute top-[1788px] left-[189px] flex h-[12px] w-[1839px] overflow-hidden border-l border-[#333] bg-[#1c1c1e]">
        <div className="flex h-[30px] w-[286px] items-start gap-[10px] border-r border-[#333] pt-[2px] pl-[36px] font-['Inter',sans-serif] text-[24px] leading-none text-[#8a8a8e]">
          <svg width="26" height="20" viewBox="0 0 26 20" fill="none" stroke="#3f7fd0" strokeWidth="2">
            <path d="M1 18V3a2 2 0 0 1 2-2h6l3 3h11a2 2 0 0 1 2 2v12" />
          </svg>
          IBM- Projects
        </div>
      </div>
    </>
  )
}

export default function App() {
  return (
    <div className="relative flex h-[1800px] w-[2880px] flex-col overflow-hidden bg-gradient-to-r from-[#0a0230] via-[#3a1468] via-75% to-[#140648]">
      <BackgroundWindows />
      <MenuBar />
      <div className="relative z-10 mt-[2px] ml-[58px] flex h-[1614px] w-[2770px] flex-col overflow-hidden rounded-t-[20px] rounded-b-[18px] shadow-[0_0_10px_#000]">
        <div className="bg-[linear-gradient(90deg,#5b5149_0%,#5a5148_18%,#47595d_30%,#4a5a5e_45%,#504658_53%,#4e5257_65%,#5f5f63_80%,#606064_100%)]">
          <Toolbar />
          <TabBar />
        </div>
        <ExpensePage />
      </div>
      <Dock />
    </div>
  )
}
